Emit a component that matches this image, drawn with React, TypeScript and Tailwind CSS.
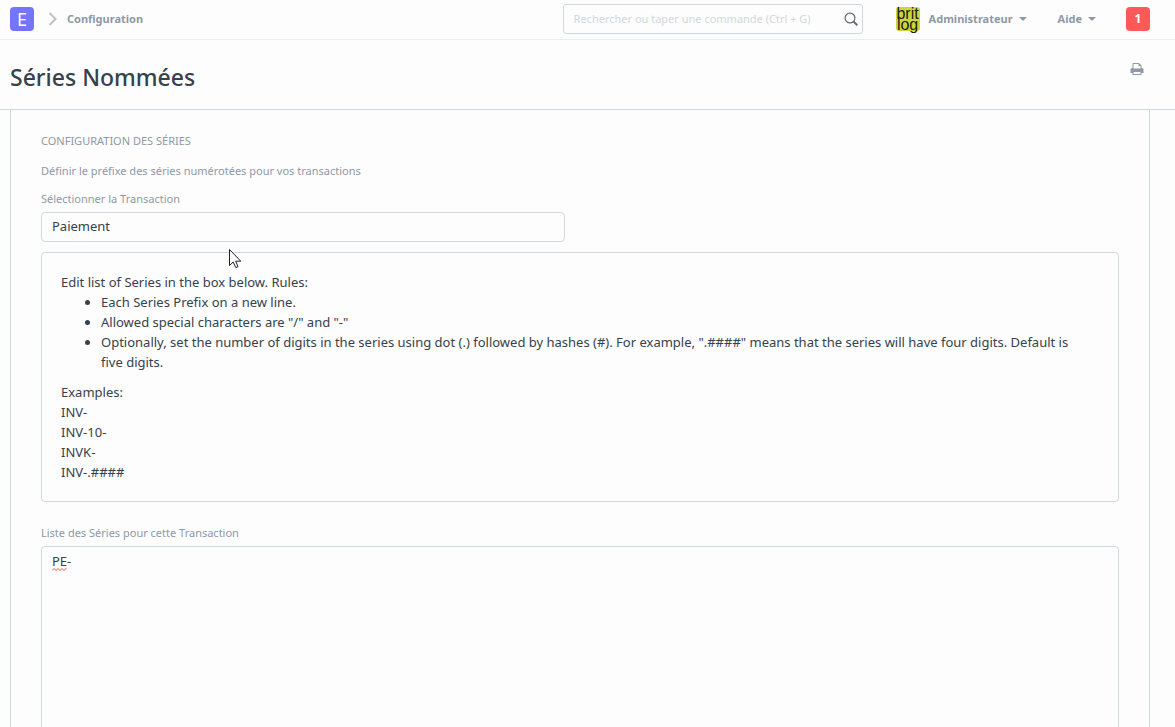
import React, { useState } from 'react';

const TRANSACTIONS = ['Paiement', 'Facture', 'Commande Client', 'Devis'];

const RULES = [
    'Each Series Prefix on a new line.',
    'Allowed special characters are "/" and "-"',
    'Optionally, set the number of digits in the series using dot (.) followed by hashes (#). For example, ".####" means that the series will have four digits. Default is five digits.',
];

const EXAMPLES = ['INV-', 'INV-10-', 'INVK-', 'INV-.####'];


// === Icons ===
//=====================================
const ChevronIcon = () => (
    <svg className="h-[14px] w-[10px]" viewBox="0 0 10 14" fill="none" stroke="#b8c2cc" strokeWidth="2" aria-hidden="true">
        <path d="M1.5 1 L7.5 7 L1.5 13" />
    </svg>
);

const SearchIcon = () => (
    <svg className="h-[14px] w-[14px]" viewBox="0 0 14 14" fill="none" stroke="#5f6b78" aria-hidden="true">
        <circle cx="6" cy="6" r="4.9" strokeWidth="1.2" />
        <path d="M9.4 9.4 L13.3 13.2" strokeWidth="2" />
    </svg>
);

const PrintIcon = () => (
    <svg className="h-[14px] w-[14px]" viewBox="0 0 14 14" fill="currentColor" aria-hidden="true">
        <path
            fillRule="evenodd"
            d="M3 1h6l2.5 2.5V6H12a1.5 1.5 0 0 1 1.5 1.5V11H11.500v2H2.500v-2H0.500V7.500A1.500 1.500 0 0 1 2 6h0.500V1.500zM3.500 2v4.500h7V4H8.500V2zM3.500 10v2h7v-2z"
        />
    </svg>
);

const Caret = () => (
    <svg className="h-[4px] w-[8px]" viewBox="0 0 8 4" fill="currentColor" aria-hidden="true">
        <path d="M0 0h8L4 4z" />
    </svg>
);

const Pointer = () => (
    <svg className="pointer-events-none absolute top-[249px] left-[229px] h-[20px] w-[13px]" viewBox="0 0 13 20" aria-hidden="true">
        <path d="M0.5 0.5 V16.5 L4.2 13 L6.8 18.6 L9 17.6 L6.6 12.2 H11.8 Z" fill="#fdfdfd" stroke="#1f1f2e" />
    </svg>
);


// === Navbar ===
//=====================================
const Navbar = () => (
    <header className="flex h-[40px] shrink-0 items-center border-b border-[#ebeced] pr-[25px] pb-px pl-[10px] text-[11px] leading-[18px] font-bold text-[#8d99a6]">
        <a href="#" className="flex h-6 w-6 items-center justify-center rounded bg-[#7574ff] text-lg font-normal text-white">E</a>
        <nav className="ml-[14px] flex items-center gap-[9px]">
            <ChevronIcon />
            <a href="#configuration">Configuration</a>
        </nav>
        <div className="ml-auto flex h-[30px] w-[300px] items-center rounded-[3px] border border-[#d1d8dd] pr-1 pl-[10px]">
            <input
                type="text"
                aria-label="Rechercher"
                placeholder="Rechercher ou taper une commande (Ctrl + G)"
                className="min-w-0 flex-1 bg-transparent font-normal outline-none placeholder:text-[#d1d8dd]"
            />
            <SearchIcon />
        </div>
        <button type="button" className="ml-[33px] flex items-center gap-[6px]">
            <span className="mr-[3px] flex h-6 w-6 flex-col items-center justify-center rounded-[3px] bg-[#cbd63c] font-['Liberation_Sans',sans-serif] text-base leading-[11px] font-normal text-[#1c1c10]">
                <span>brit</span>
                <span>log</span>
            </span>
            Administrateur
            <Caret />
        </button>
        <button type="button" className="ml-[31px] flex items-center gap-[6px]">
            Aide
            <Caret />
        </button>
        <button type="button" className="ml-[30px] h-6 w-6 rounded bg-[#ff5858] text-xs text-white">1</button>
    </header>
);


const App: React.FC = () => {
    const [transaction, setTransaction] = useState('Paiement');
    const [series, setSeries] = useState('PE-');

    return (
        <div className="relative flex h-screen flex-col overflow-hidden bg-[#fdfdfd] font-['Noto_Sans','Open_Sans',sans-serif] text-[13px] text-[#36414c]">
            <Navbar />

            <div className="flex h-[70px] shrink-0 items-center justify-between border-b border-[#d1d8dd] pr-[31px] pl-[10px]">
                <h1 className="pt-[6px] text-[23px] font-medium">Séries Nommées</h1>
                <button type="button" aria-label="Imprimer" className="pb-3 text-[#8d99a6]">
                    <PrintIcon />
                </button>
            </div>

            <main className="mr-[25px] ml-[10px] flex-1 overflow-hidden border-x border-[#d1d8dd] px-[30px] pt-[22px]">
                <h2 className="text-[11px] leading-[18px] text-[#8d99a6] uppercase">Configuration des séries</h2>
                <p className="mt-3 text-[11px] leading-[18px] text-[#8d99a6]">Définir le préfixe des séries numérotées pour vos transactions</p>

                <label htmlFor="transaction" className="mt-[10px] block text-[11px] leading-[18px] text-[#8d99a6]">Sélectionner la Transaction</label>
                <select
                    id="transaction"
                    value={transaction}
                    onChange={(e) => setTransaction(e.target.value)}
                    className="mt-1 block h-[30px] w-[calc(50%-15px)] appearance-none rounded border border-[#d1d8dd] px-[10px] outline-none"
                >
                    {TRANSACTIONS.map((name) => (
                        <option key={name}>{name}</option>
                    ))}
                </select>

                <section className="mt-[10px] rounded border border-[#d1d8dd] py-[19px] pr-8 pl-[19px] leading-5">
                    <p>Edit list of Series in the box below. Rules:</p>
                    <ul className="mb-[10px] list-disc pl-10">
                        {RULES.map((rule) => (
                            <li key={rule}>{rule}</li>
                        ))}
                    </ul>
                    <p>Examples:</p>
                    {EXAMPLES.map((example) => (
                        <p key={example}>{example}</p>
                    ))}
                </section>

                <label htmlFor="series" className="mt-[22px] block text-[11px] leading-[18px] text-[#8d99a6]">Liste des Séries pour cette Transaction</label>
                <div className="relative mt-1">
                    <textarea
                        id="series"
                        value={series}
                        onChange={(e) => setSeries(e.target.value)}
                        spellCheck={false}
                        className="block h-[300px] w-full resize-none rounded border border-[#d1d8dd] px-[10px] py-1 leading-5 outline-none"
                    />
                    {/* spelling mark under the prefix */}
                    <svg className="pointer-events-none absolute top-[22px] left-[11px] h-[3px] w-[15px]" viewBox="0 0 15 3" fill="none" stroke="#ff4a4a" aria-hidden="true">
                        <path d="M0 2.5 L2 0.5 L4 2.5 L6 0.5 L8 2.5 L10 0.5 L12 2.5 L14 0.5 L15 1.5" />
                    </svg>
                </div>
            </main>

            <Pointer />
        </div>
    );
};

export default App;
